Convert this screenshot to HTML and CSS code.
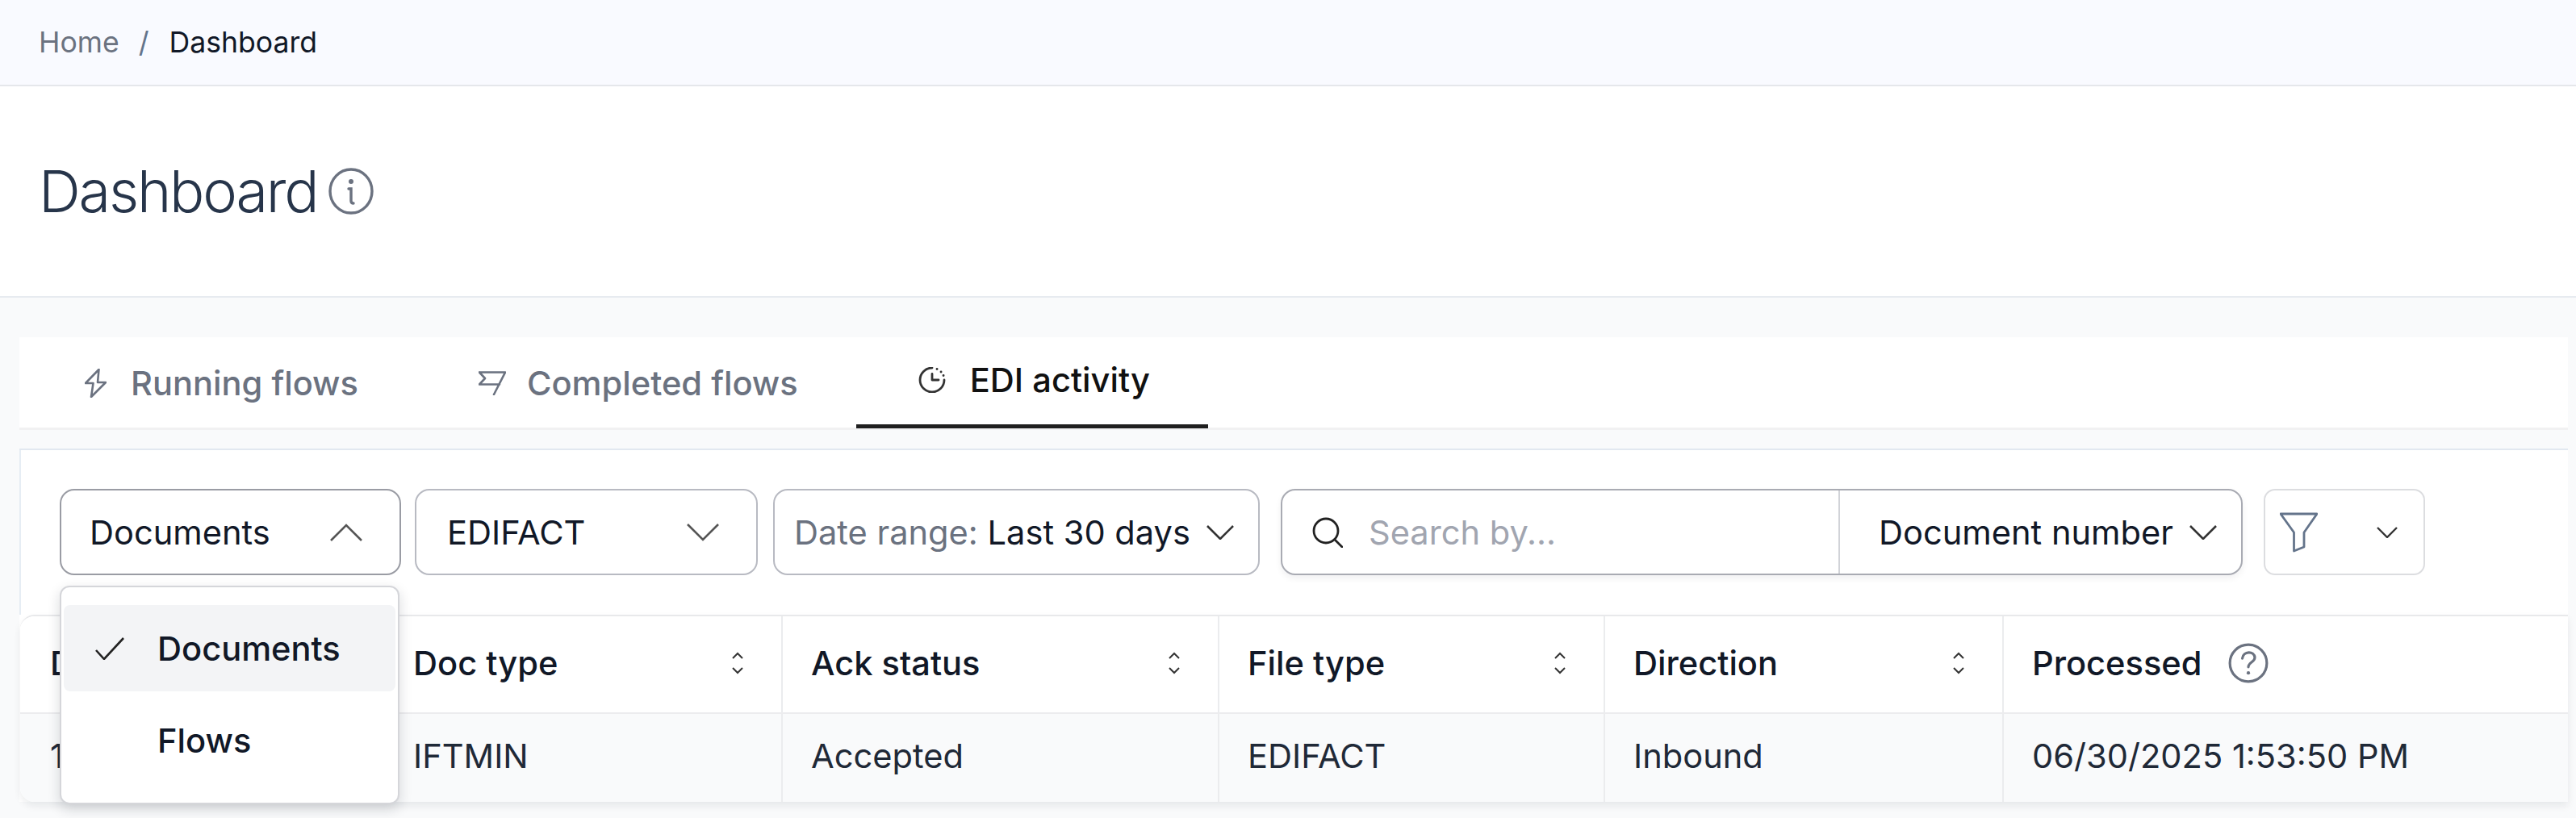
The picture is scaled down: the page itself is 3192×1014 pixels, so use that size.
FILE: index.html
```html
<!DOCTYPE html>
<html lang="en">
<head>
<meta charset="utf-8">
<title>Dashboard</title>
<link rel="stylesheet" href="styles.css">
</head>
<body>
<nav class="crumbs"><span class="crumb-home">Home</span><span class="crumb-sep">/</span><span class="crumb-current">Dashboard</span></nav>
<header class="page-head">
  <h1 class="page-title">Dashboard</h1>
  <svg class="info-icon" viewBox="0 0 56 58" fill="none" stroke="#6b7280" stroke-width="3.4" stroke-linecap="round"><ellipse cx="28" cy="29" rx="26" ry="27"/><circle cx="28" cy="17" r="3" fill="#6b7280" stroke="none"/><path d="M25 26h3v15c0 2 1 3 3 3"/></svg>
</header>
<main class="content">
  <div class="tabs">
    <div class="tab">
      <svg class="tab-icon zap" viewBox="0 0 27 36" fill="none" stroke="#6b7280" stroke-width="2.6" stroke-linejoin="round"><path d="M17.5 1 1 18h9.5L8 35l18-18H16z"/></svg>
      <span>Running flows</span>
    </div>
    <div class="tab">
      <svg class="tab-icon flag" viewBox="0 0 34 30" fill="none" stroke="#6b7280" stroke-width="2.6" stroke-linejoin="round" stroke-linecap="round"><path d="M1 1.5h32L19 29M1 1.5l7 7.5-7 7.5h25"/></svg>
      <span>Completed flows</span>
    </div>
    <div class="tab tab-active">
      <svg class="tab-icon clock" viewBox="0 0 34 32" fill="none" stroke="#333" stroke-width="2.8" stroke-linecap="round" stroke-linejoin="round"><path d="M17 1A15 15 0 1 0 32 16"/><path d="M17 8.500V16h8"/><path d="M23 2.500h.1M28 6h.1M31 10.500h.1"/></svg>
      <span>EDI activity</span>
    </div>
  </div>
  <section class="panel">
    <div class="toolbar">
      <div class="select-wrap">
        <div class="select select-type">
          <span>Documents</span>
          <svg class="chev-lg" viewBox="0 0 40 22" fill="none" stroke="#555" stroke-width="2.6"><path d="M1 21 20 2l19 19"/></svg>
        </div>
        <div class="menu">
          <div class="menu-item menu-item-on">
            <svg class="check" viewBox="0 0 36 28" fill="none" stroke="#222" stroke-width="2.6"><path d="M1 16l10 11L35 1"/></svg>
            <span>Documents</span>
          </div>
          <div class="menu-item menu-item-flows"><span class="menu-flows">Flows</span></div>
        </div>
      </div>
      <div class="select select-format">
        <span>EDIFACT</span>
        <svg class="chev-lg" viewBox="0 0 40 22" fill="none" stroke="#555" stroke-width="2.6"><path d="M1 1l19 19L39 1"/></svg>
      </div>
      <div class="select select-date">
        <span class="date-text"><span class="date-label">Date range:</span> Last 30 days</span>
        <svg class="chev-md" viewBox="0 0 34 18" fill="none" stroke="#333" stroke-width="2.6"><path d="M1 1l16 16L33 1"/></svg>
      </div>
      <div class="search">
        <div class="search-field">
          <svg class="search-icon" viewBox="0 0 38 38" fill="none" stroke="#222" stroke-width="2.8" stroke-linecap="round"><circle cx="17" cy="17" r="15"/><path d="m28 28 9 9"/></svg>
          <span class="placeholder">Search by...</span>
        </div>
        <div class="search-by">
          <span>Document number</span>
          <svg class="chev-md" viewBox="0 0 34 18" fill="none" stroke="#333" stroke-width="2.6"><path d="M1 1l16 16L33 1"/></svg>
        </div>
      </div>
      <div class="filter-btn">
        <svg class="filter-icon" viewBox="0 0 47 50" fill="none" stroke="#64748b" stroke-width="2.8" stroke-linejoin="round"><path d="M1 2h45L30 25v18l-12.500 5V25z"/></svg>
        <svg class="chev-sm" viewBox="0 0 26 14" fill="none" stroke="#333" stroke-width="2.4"><path d="m1 1 12 12L25 1"/></svg>
      </div>
    </div>
    <div class="table">
      <div class="cell head c1"><span>D</span></div>
      <div class="cell head c2"><span>Doc type</span><svg class="sort" viewBox="0 0 16 28" fill="none" stroke="#333" stroke-width="2"><path d="m2 8 6-6 6 6M2 20l6 6 6-6"/></svg></div>
      <div class="cell head c3"><span>Ack status</span><svg class="sort" viewBox="0 0 16 28" fill="none" stroke="#333" stroke-width="2"><path d="m2 8 6-6 6 6M2 20l6 6 6-6"/></svg></div>
      <div class="cell head c4"><span>File type</span><svg class="sort" viewBox="0 0 16 28" fill="none" stroke="#333" stroke-width="2"><path d="m2 8 6-6 6 6M2 20l6 6 6-6"/></svg></div>
      <div class="cell head c5"><span>Direction</span><svg class="sort" viewBox="0 0 16 28" fill="none" stroke="#333" stroke-width="2"><path d="m2 8 6-6 6 6M2 20l6 6 6-6"/></svg></div>
      <div class="cell head c6 head-help"><span>Processed</span><svg class="help" viewBox="0 0 47 47" fill="none" stroke="#6b7280" stroke-width="3" stroke-linecap="round"><circle cx="23.500" cy="23.500" r="21.500"/><path d="M16.500 18c1-9 14-9 14.500-1 .3 5-7.500 5.500-7.500 11"/><circle cx="23.500" cy="35" r="2" fill="#6b7280" stroke="none"/></svg></div>
      <div class="cell body c1"><span>1</span></div>
      <div class="cell body c2"><span>IFTMIN</span></div>
      <div class="cell body c3"><span>Accepted</span></div>
      <div class="cell body c4"><span>EDIFACT</span></div>
      <div class="cell body c5"><span>Inbound</span></div>
      <div class="cell body c6"><span>06/30/2025 1:53:50 PM</span></div>
    </div>
  </section>
</main>
</body>
</html>
```

FILE: styles.css
```css
* { box-sizing: border-box; }
html, body { margin: 0; padding: 0; }
body {
  width: 3192px;
  height: 1014px;
  overflow: hidden;
  background: #f9fafb;
  font-family: Inter, "Liberation Sans", sans-serif;
  color: #111827;
  font-size: 41.6px;
}
.crumbs {
  height: 107px;
  background: #f9faff;
  border-bottom: 2px solid #e5e7eb;
  display: flex;
  align-items: center;
  padding: 0 0 0 48px;
  font-size: 35.6px;
}
.crumb-home { color: #6b7280; }
.crumb-sep { color: #64748b; margin: 0 25px 0 24px; }
.crumb-current { color: #111827; }
.page-head {
  height: 262px;
  background: #fff;
  border-bottom: 2px solid #e7ebf0;
  display: flex;
  align-items: center;
  padding: 0 0 0 48px;
}
.page-title {
  margin: 0;
  font-size: 72px;
  letter-spacing: -2.2px;
  font-weight: 300;
  color: #27354a;
  line-height: 80px;
}
.info-icon { width: 56px; height: 58px; margin-left: 14px; }
.content { padding: 49px 10px 0 24px; }
.tabs {
  height: 115px;
  background: #fff;
  border-bottom: 3px solid #f1f1f2;
  display: flex;
  padding-left: 4px;
}
.tab {
  display: flex;
  align-items: center;
  height: 113px;
  padding: 0 72px 0 77px;
  color: #6b7280;
  font-weight: 500;
  font-size: 41.6px;
}
.tab-active {
  color: #111;
  border-bottom: 5px solid #1f1f1f;
  padding-bottom: 3px;
}
.tab-icon { flex: none; }
.zap { width: 27px; height: 36px; margin-right: 30px; }
.flag { width: 34px; height: 30px; margin-right: 26px; }
.clock { width: 34px; height: 32px; margin-right: 30px; }
.panel {
  margin-top: 23px;
  background: #fff;
  border-top: 2px solid #e2e8f0;
}
.toolbar {
  display: flex;
  gap: 17px;
  height: 204px;
  padding: 48px 0 0 48px;
  border-left: 2px solid #e6edf4;
}
.select-wrap { position: relative; }
.select {
  height: 107px;
  border: 2px solid #b8bac2;
  border-radius: 18px;
  background: #fff;
  display: flex;
  align-items: center;
  justify-content: space-between;
}
.select-type { width: 423px; padding: 0 46px 0 35px; border-color: #9a9ca4; }
.select-format { width: 425px; padding: 0 46px 0 38px; }
.select-date { width: 603px; padding: 0 30px 0 24px; margin-left: 2px; }
.date-label { color: #6b7280; }
.chev-lg { width: 40px; height: 22px; flex: none; }
.chev-md { width: 34px; height: 18px; flex: none; }
.chev-sm { width: 26px; height: 14px; flex: none; }
.menu {
  position: absolute;
  top: 120px;
  left: 0;
  width: 421px;
  height: 271px;
  padding: 22px 3px 0;
  background: #fff;
  border: 2px solid #d5d6da;
  border-radius: 12px;
  box-shadow: 0 6px 16px rgba(17, 24, 39, .16);
  z-index: 5;
  font-weight: 500;
}
.menu-item {
  height: 107px;
  display: flex;
  align-items: center;
  padding-left: 39px;
  border-radius: 8px;
}
.menu-item-on { background: #f3f4f6; }
.menu-item-flows { margin-top: 7px; }
.check { width: 36px; height: 28px; margin-right: 41px; flex: none; }
.menu-flows { margin-left: 77px; }
.search {
  width: 1192px;
  height: 107px;
  margin-left: 9px;
  display: flex;
  background: #fff;
  border: 2px solid #a9abb3;
  border-radius: 18px;
  box-shadow: 0 4px 8px rgba(17, 24, 39, .06);
}
.search-field {
  width: 691px;
  display: flex;
  align-items: center;
  padding-left: 37px;
  border-right: 2px solid #d1d3d8;
}
.search-icon { width: 38px; height: 38px; margin-right: 32px; flex: none; }
.placeholder { color: #a1a5b0; }
.search-by {
  flex: 1;
  display: flex;
  align-items: center;
  justify-content: space-between;
  padding: 0 30px 0 48px;
}
.filter-btn {
  width: 200px;
  height: 107px;
  margin-left: 9px;
  display: flex;
  align-items: center;
  justify-content: space-between;
  padding: 0 32px 0 18px;
  border: 2px solid #dcdde0;
  border-radius: 14px;
  background: #fff;
}
.filter-icon { width: 47px; height: 50px; flex: none; }
.table {
  display: grid;
  grid-template-columns: 448px 495px 541px 478px 494px 1fr;
  grid-template-rows: 121px 109px;
  margin-left: 1px;
  background: #fff;
  border-top: 2px solid #e8e9eb;
  border-top-left-radius: 18px;
  border-bottom-left-radius: 18px;
  box-shadow: 0 5px 10px rgba(17, 24, 39, .08);
  overflow: hidden;
}
.cell {
  display: flex;
  align-items: center;
  justify-content: space-between;
  padding: 0 46px 0 35px;
  border-left: 2px solid #ebecee;
}
.c1 { border-left: 0; padding-left: 37px; }
.c2 { padding-left: 37px; }
.head { font-weight: 500; color: #111827; background: #fff; border-bottom: 2px solid #ececee; padding-bottom: 4px; }
.head-help { justify-content: flex-start; }
.body { background: #f9fafb; color: #1f2937; padding-bottom: 5px; }
.sort { width: 16px; height: 28px; flex: none; }
.help { width: 50px; height: 50px; margin-left: 32px; flex: none; }
```
